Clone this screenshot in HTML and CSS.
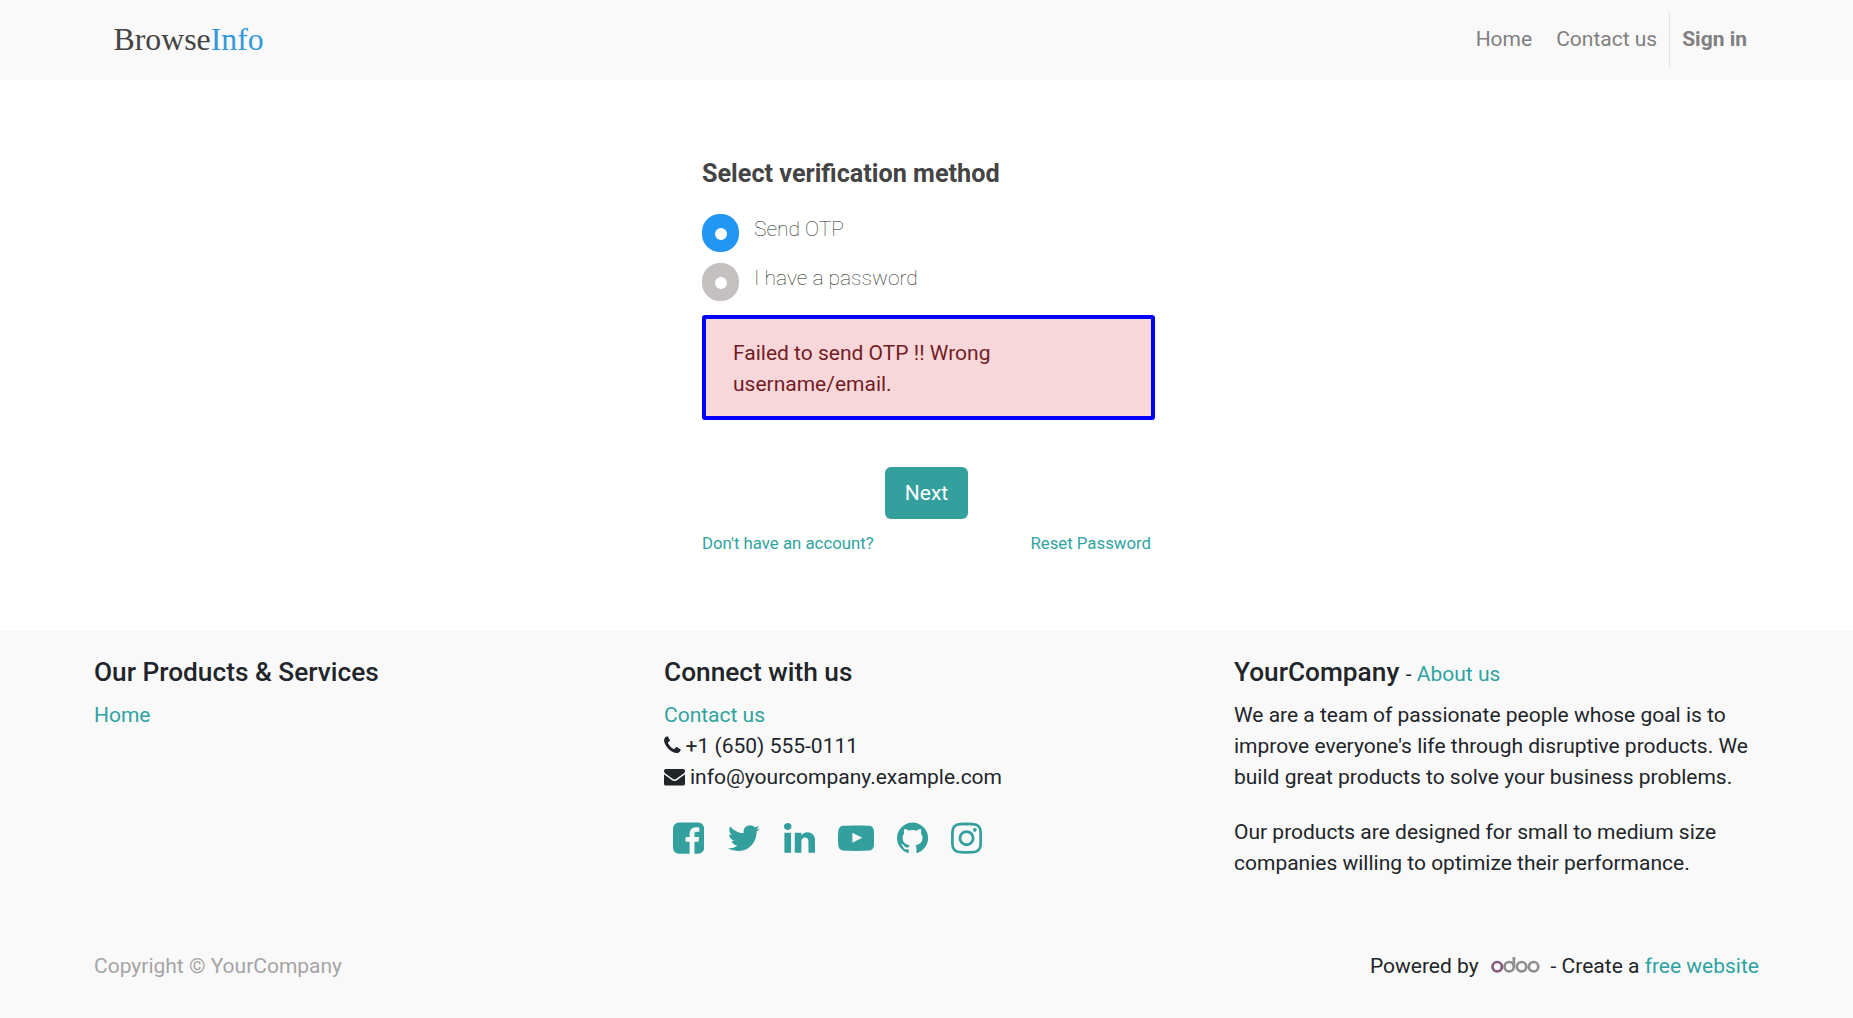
FILE: index.html
```html
<!DOCTYPE html>
<html lang="en">
<head>
<meta charset="utf-8">
<title>Login | BrowseInfo</title>
<link rel="stylesheet" href="styles.css">
</head>
<body>
<header class="navbar">
  <div class="container navbar-inner">
    <a class="brand" href="#">Browse<span class="brand-accent">Info</span></a>
    <nav class="nav">
      <a class="nav-link" href="#">Home</a>
      <a class="nav-link" href="#">Contact us</a>
      <a class="nav-link nav-signin" href="#">Sign in</a>
    </nav>
  </div>
</header>
<main class="main">
  <form class="login">
    <h1 class="login-title">Select verification method</h1>
    <label class="method"><span class="radio radio-on"></span>Send OTP</label>
    <label class="method"><span class="radio"></span>I have a password</label>
    <p class="alert">Failed to send OTP !! Wrong<br>username/email.</p>
    <button class="btn" type="button">Next</button>
    <div class="login-links">
      <a href="#">Don't have an account?</a>
      <a href="#">Reset Password</a>
    </div>
  </form>
</main>
<footer class="footer">
  <div class="container footer-cols">
    <section>
      <h2 class="footer-title">Our Products &amp; Services</h2>
      <div><a href="#">Home</a></div>
    </section>
    <section>
      <h2 class="footer-title">Connect with us</h2>
      <div><a href="#">Contact us</a></div>
      <div class="contact"><svg class="fa-phone" viewBox="192 0 1408 1792"><path d="M1600 1240q0 27-10 70.5t-21 68.5q-21 50-122 106-94 51-186 51-27 0-53-3.5t-57.5-12.5-47-14.5-55.5-20.5-49-18q-98-35-175-83-127-79-264-216t-216-264q-48-77-83-175-3-9-18-49t-20.5-55.5-14.5-47-12.5-57.5-3.5-53q0-92 51-186 56-101 106-122 25-11 68.5-21t70.5-10q14 0 21 3 18 6 53 76 11 19 30 54t35 63.5 31 53.5q3 4 17.5 25t21.5 35.5 7 28.5q0 20-28.5 50t-62 55-62 53-28.5 46q0 9 5 22.5t8.5 20.5 14 24 11.5 19q76 137 174 235t235 174q2 1 19 11.5t24 14 20.5 8.5 22.5 5q18 0 46-28.5t53-62 55-62 50-28.5q14 0 28.5 7t35.5 21.5 25 17.5q25 15 53.5 31t63.5 35 54 30q70 35 76 53 3 7 3 21z"/></svg>+1 (650) 555-0111</div>
      <div class="contact"><svg class="fa-envelope" viewBox="0 0 1792 1792"><path d="M1792 710v794q0 66-47 113t-113 47h-1472q-66 0-113-47t-47-113v-794q44 49 101 87 362 246 497 345 57 42 92.5 65.5t94.5 48 110 24.5h2q51 0 110-24.5t94.5-48 92.5-65.5q170-123 498-345 57-39 100-87zm0-294q0 79-49 151t-122 123q-376 261-468 325-10 7-42.5 31t-54 38.5-52 32.5-57.5 27-50 9h-2q-23 0-50-9t-57.5-27-52-32.5-54-38.5-42.5-31q-91-64-262-182.5t-205-142.5q-62-42-117-115.5t-55-136.5q0-78 41.5-130t118.5-52h1472q65 0 112.5 47t47.5 113z"/></svg>info@yourcompany.example.com</div>
      <div class="social">
        <a href="#" aria-label="Facebook"><svg viewBox="128 0 1536 1792"><path d="M1376 128q119 0 203.5 84.5t84.5 203.5v960q0 119-84.5 203.5t-203.5 84.5h-188v-595h199l30-232h-229v-148q0-56 23.5-84t91.5-28l122-1v-207q-63-9-178-9-136 0-217.5 80t-81.5 226v171h-200v232h200v595h-532q-119 0-203.5-84.5t-84.5-203.5v-960q0-119 84.5-203.5t203.5-84.5h960z"/></svg></a>
        <a href="#" aria-label="Twitter"><svg viewBox="64 0 1664 1792"><path d="M1684 408q-67 98-162 167 1 14 1 42 0 130-38 259.5t-115.5 248.5-184.5 210.5-258 146-323 54.5q-271 0-496-145 35 4 78 4 225 0 401-138-105-2-188-64.5t-114-159.5q33 5 61 5 43 0 85-11-112-23-185.5-111.5t-73.5-205.5v-4q68 38 146 41-66-44-105-115t-39-154q0-88 44-163 121 149 294.5 238.5t371.5 99.5q-8-38-8-74 0-134 94.5-228.5t228.5-94.5q140 0 236 102 109-21 205-78-37 115-142 178 93-10 186-50z"/></svg></a>
        <a href="#" aria-label="LinkedIn"><svg viewBox="128 0 1536 1792"><path d="M477 625v991h-330v-991h330zm21-306q1 73-50.5 122t-135.5 49h-2q-82 0-132-49t-50-122q0-74 51.5-122.5t134.5-48.5 133 48.5 51 122.5zm1166 729v568h-329v-530q0-105-40.5-164.5t-126.5-59.5q-63 0-105.5 34.5t-63.5 85.5q-11 30-11 81v553h-329q2-399 2-647t-1-296l-1-48h329v144h-2q20-32 41-56t56.5-52 87-43.5 114.5-15.5q171 0 275 113.5t104 332.5z"/></svg></a>
        <a href="#" aria-label="YouTube"><svg viewBox="0 0 1792 1792"><path d="M711 1128l484-250-484-253v503zm185-862q168 0 324.5 4.5t229.5 9.5l73 4q1 0 17 1.5t23 3 23.5 4.5 28.5 8 28 13 31 19.5 29 26.5q6 6 15.5 18.5t29 58.5 26.5 101q8 64 12.5 136.5t5.5 113.5v40 136q1 145-18 290-7 55-25 99.5t-32 61.5l-14 17q-14 15-29 26.5t-31 19-28 12.5-28.5 8-24 4.5-23 3-16.5 1.5q-251 19-627 19-207-2-359.5-6.5t-200.5-7.5l-49-4-36-4q-36-5-54.5-10t-51-21-56.5-41q-6-6-15.5-18.5t-29-58.5-26.5-101q-8-64-12.5-136.5t-5.5-113.5v-40-136q-1-145 18-290 7-55 25-99.5t32-61.5l14-17q14-15 29-26.5t31-19.5 28-13 28.5-8 23.5-4.5 23-3 17-1.5q251-18 627-18z"/></svg></a>
        <a href="#" aria-label="GitHub"><svg viewBox="128 0 1536 1792"><path d="M896 128q209 0 385.5 103t279.5 279.5 103 385.5q0 251-146.5 451.5t-378.5 277.5q-27 5-40-7t-13-30q0-3 .5-76.5t.5-134.5q0-97-52-142 57-6 102.5-18t94-39 81-66.5 53-105 20.5-150.5q0-119-79-206 37-91-8-204-28-9-81 11t-92 44l-38 24q-93-26-192-26t-192 26q-16-11-42.5-27t-83.5-38.5-85-13.5q-45 113-8 204-79 87-79 206 0 85 20.5 150t52.5 105 80.5 67 94 39 102.5 18q-39 36-49 103-21 10-45 15t-57 5-65.5-21.5-55.5-62.5q-19-32-48.5-52t-49.5-24l-20-3q-21 0-29 4.5t-5 11.5 9 14 13 12l7 5q22 10 43.5 38t31.5 51l10 23q13 38 44 61.5t67 30 69.5 7 55.5-3.5l23-4q0 38 .5 88.5t.5 54.5q0 18-13 30t-40 7q-232-77-378.5-277.5t-146.5-451.5q0-209 103-385.5t279.5-279.5 385.5-103z"/></svg></a>
        <a href="#" aria-label="Instagram"><svg viewBox="128 0 1536 1792"><path d="M1152 896q0-106-75-181t-181-75-181 75-75 181 75 181 181 75 181-75 75-181zm138 0q0 164-115 279t-279 115-279-115-115-279 115-279 279-115 279 115 115 279zm108-410q0 38-27 65t-65 27-65-27-27-65 27-65 65-27 65 27 27 65zm-502-220q-7 0-76.5-.5t-105.5 0-96.5 3-103 10-71.5 18.5q-50 20-88 58t-58 88q-11 29-18.5 71.5t-10 103-3 96.5 0 105.5.5 76.5-.5 76.5 0 105.5 3 96.5 10 103 18.5 71.5q20 50 58 88t88 58q29 11 71.5 18.5t103 10 96.5 3 105.5 0 76.5-.5 76.5.5 105.5 0 96.5-3 103-10 71.5-18.5q50-20 88-58t58-88q11-29 18.5-71.5t10-103 3-96.5 0-105.5-.5-76.5.5-76.5 0-105.5-3-96.5-10-103-18.5-71.5q-20-50-58-88t-88-58q-29-11-71.5-18.5t-103-10-96.5-3-105.5 0-76.5.5zm768 630q0 229-5 317-10 208-124 322t-322 124q-88 5-317 5t-317-5q-208-10-322-124t-124-322q-5-88-5-317t5-317q10-208 124-322t322-124q88-5 317-5t317 5q208 10 322 124t124 322q5 88 5 317z"/></svg></a>
      </div>
    </section>
    <section>
      <h2 class="footer-title">YourCompany <span class="about">- <a href="#">About us</a></span></h2>
      <p class="footer-text">We are a team of passionate people whose goal is to<br>improve everyone's life through disruptive products. We<br>build great products to solve your business problems.</p>
      <p class="footer-text">Our products are designed for small to medium size<br>companies willing to optimize their performance.</p>
    </section>
  </div>
  <div class="container copyright">
    <span class="muted">Copyright © YourCompany</span>
    <div class="powered">
      <span>Powered by</span>
      <svg class="odoo" viewBox="0 0 62 25"><circle class="odoo-first" cx="13.2" cy="13.7" r="4.7"/><circle cx="25.2" cy="13.7" r="4.7"/><path d="M29.9 4v9.7"/><circle cx="37.6" cy="13.7" r="4.7"/><circle cx="49.6" cy="13.7" r="4.7"/></svg>
      <span>- Create a <a href="#">free website</a></span>
    </div>
  </div>
</footer>
</body>
</html>
```
FILE: styles.css
```css
* { box-sizing: border-box; }
body {
  margin: 0;
  background: #fff;
  color: #212529;
  font: 400 21px/31px Roboto, "Liberation Sans", sans-serif;
}
a { color: #2fa3a1; text-decoration: none; }
h1, h2, p { margin: 0; }
svg { display: block; fill: currentColor; }
.container { width: 1710px; margin: 0 auto; padding: 0 22.5px; }

.navbar { height: 80px; background: #f9f9f9; }
.navbar-inner { display: flex; justify-content: space-between; padding-top: 12px; }
.brand {
  padding: 1px 0 0 19.5px;
  color: #444;
  font: 31.8px/54px "Liberation Serif", serif;
}
.brand-accent { color: #3498db; }
.nav { display: flex; height: 55px; }
.nav-link { padding: 12px 12px 11px; color: #808080; }
.nav-signin { border-left: 1px solid #e4e4e4; font-weight: 700; }

.main { height: 551px; padding-top: 74px; }
.login { width: 449px; margin: 0 auto; }
.login-title {
  margin-bottom: 20px;
  color: #444;
  font-size: 25.2px;
  font-weight: 700;
  line-height: 40px;
}
.method {
  display: flex;
  gap: 15px;
  height: 38px;
  margin-bottom: 11px;
  color: #1c1f22;
  font-size: 21px;
  font-weight: 100;
  line-height: 30px;
}
.radio {
  display: grid;
  place-items: center;
  width: 37px;
  height: 38px;
  border-radius: 18px;
  background: #c4c0c0;
}
.radio::after { content: ""; width: 12px; height: 12px; margin: 2px 0 0 1px; border-radius: 50%; background: #fff; }
.radio-on { background: #2196f3; }
.alert {
  width: 453px;
  height: 105px;
  margin-top: 14px;
  padding: 19px 27px 0;
  border: 4px solid #00f;
  border-radius: 3px;
  background: #f8d7da;
  color: #721c24;
}
.btn {
  display: block;
  width: 83px;
  height: 52px;
  margin: 47px auto 13px;
  padding: 0;
  border: 0;
  border-radius: 6px;
  background: #33a09e;
  color: #fff;
  font: inherit;
}
.login-links { display: flex; justify-content: space-between; font-size: 16.8px; line-height: 22px; }

.footer { height: 387px; padding-top: 25px; background: #f9f9f9; }
.footer-cols { display: grid; grid-template-columns: 570px 570px 525px; height: 270px; }
.footer-title { height: 32px; margin-bottom: 12px; font-size: 26.25px; font-weight: 500; line-height: 32px; }
.about { font-size: 21px; font-weight: 400; }
.contact { display: flex; align-items: center; gap: 5px; }
.contact svg { margin-bottom: 3px; }
.fa-phone { width: 16.6px; height: 21px; }
.fa-envelope { width: 21px; height: 21px; }
.social { display: flex; gap: 23px; margin: 27px 0 0 9px; }
.social a { color: #33a09e; }
.social svg { height: 36.3px; }
.footer-text { margin-bottom: 24px; }
.copyright { display: flex; justify-content: space-between; padding-top: 25px; }
.muted { color: #a5a5a5; }
.powered { display: flex; align-items: center; gap: 5px; }
.odoo { width: 62px; height: 25px; margin-bottom: 2px; background: #f8f9fa; fill: none; stroke: #8f8f8f; stroke-width: 2.7; }
.odoo-first { stroke: #875a7b; }
```
